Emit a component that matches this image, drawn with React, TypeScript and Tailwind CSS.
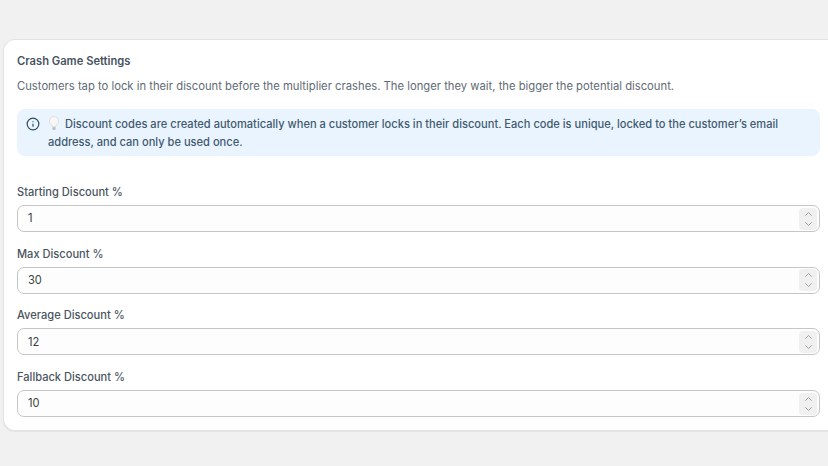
import { ChevronDown, ChevronUp, Info } from 'lucide-react'

const fields = [
  { label: 'Starting Discount %', value: '1' },
  { label: 'Max Discount %', value: '30' },
  { label: 'Average Discount %', value: '12' },
  { label: 'Fallback Discount %', value: '10' },
]

function Bulb() {
  return (
    <svg width="12" height="15" viewBox="0 0 12 15" className="mr-[5px] inline-block align-[-3px]">
      <path d="M6 .5a4.6 4.6 0 0 0-2.8 8.2c.6.5.9 1.1.9 1.8h3.8c0-.7.3-1.3.9-1.8A4.6 4.6 0 0 0 6 .5z" fill="#f7f8f6" stroke="#d5d8d8" strokeWidth="0.8" />
      <path d="M4.3 11.3h3.4v1.2c0 .8-.8 1.6-1.7 1.6s-1.7-.8-1.7-1.6z" fill="#b9bfc4" />
    </svg>
  )
}

function NumberField({ label, value }: { label: string; value: string }) {
  return (
    <div className="flex flex-col">
      <label className="h-[14px] text-[11.1px] leading-[14px] font-medium text-[#4a5560]">{label}</label>
      <div className="mt-[6px] flex h-[27px] items-center justify-between rounded-[7px] border border-[#c4c6c8] bg-[#fdfdfd] pr-[2px] pl-[10px]">
        <span className="text-[11.1px] text-[#3a3f44]">{value}</span>
        <div className="flex h-[22px] w-[18px] flex-col items-center justify-center rounded-[4px] bg-[#f0f0f0] text-[#8a8a8a]">
          <ChevronUp size={13} strokeWidth={1.5} className="-mb-[1px]" />
          <ChevronDown size={13} strokeWidth={1.5} className="-mt-[1px]" />
        </div>
      </div>
    </div>
  )
}

export default function App() {
  return (
    <div className="h-[466px] w-[828px] overflow-hidden bg-[#f1f1f1] pt-[39px] pl-[3px] font-['Inter',sans-serif]">
      <div className="h-[392px] w-[825px] rounded-l-[12px] border-y border-l border-[#e3e3e3] bg-white pt-[14px] pr-[8px] pl-[13px] shadow-[0_1px_1px_rgba(0,0,0,0.06)]">
        <h2 className="h-[14px] text-[11.2px] leading-[14px] font-semibold text-[#46535f]">Crash Game Settings</h2>
        <p className="mt-[11px] h-[14px] text-[11.25px] leading-[14px] text-[#616a75]">
          Customers tap to lock in their discount before the multiplier crashes. The longer they wait, the bigger the potential discount.
        </p>
        <div className="mt-[16px] flex h-[47px] gap-[9px] rounded-[8px] bg-[#eaf4ff] pt-[7px] pr-[12px] pl-[9px]">
          <Info size={14} strokeWidth={2} className="mt-[1px] shrink-0 text-[#2c4a5e]" />
          <p className="-ml-[1px] text-[11.1px] leading-[17.5px] font-medium text-[#415a6e]">
            <Bulb />
            Discount codes are created automatically when a customer locks in their discount. Each code is unique, locked to the customer’s email address, and can only be used once.
          </p>
        </div>
        <div className="mt-[29px] flex flex-col gap-[14.7px]">
          {fields.map((f) => (
            <NumberField key={f.label} label={f.label} value={f.value} />
          ))}
        </div>
      </div>
    </div>
  )
}
